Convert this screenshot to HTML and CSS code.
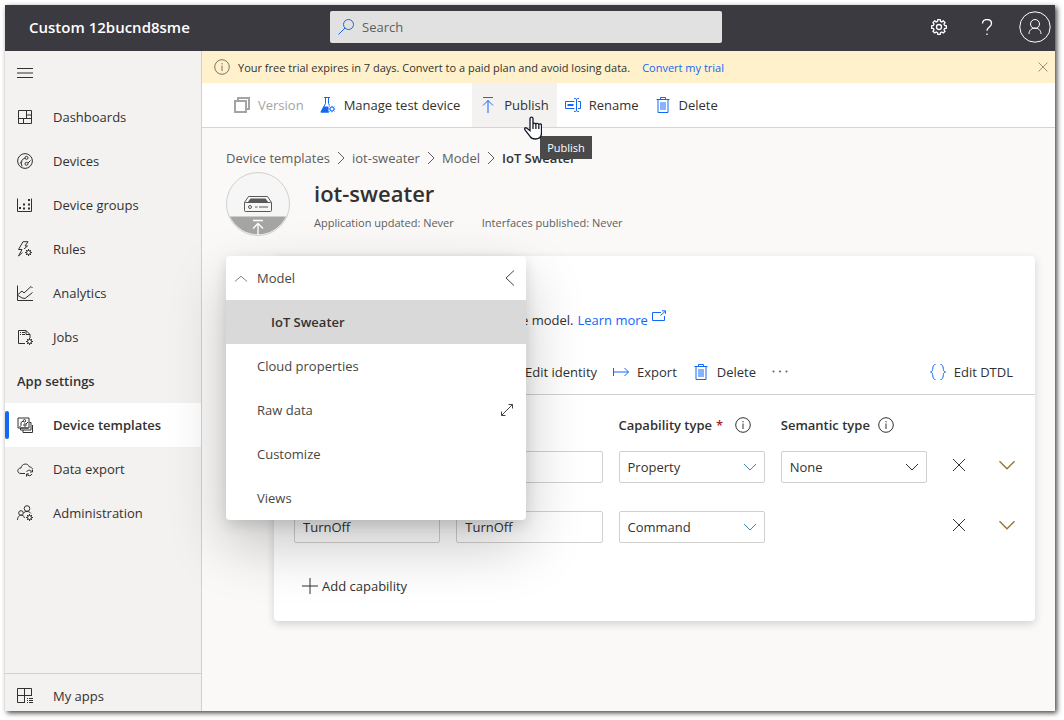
FILE: index.html
```html
<!DOCTYPE html>
<html lang="en">
<head>
<meta charset="utf-8">
<title>iot-sweater</title>
<link rel="stylesheet" href="styles.css">
</head>
<body>
<svg class="sprite" aria-hidden="true">
  <symbol id="gear-small" viewBox="0 0 7 7"><circle cx="3.5" cy="3.5" r="2"/><path d="M3.5 0v1.5M3.5 5.5V7M0 3.5h1.5M5.500 3.500H7M1 1l1.100 1.100M4.900 4.900L6 6M6 1L4.900 2.100M2.100 4.900L1 6"/></symbol>
  <symbol id="trash" viewBox="0 0 16 16"><path d="M1.500 2.500h13M5.500 2.500v-2h5v2M3 2.500v13h10v-13M6 5v8M8 5v8M10 5v8"/></symbol>
  <symbol id="down" viewBox="0 0 16 16"><path d="M2 5l6 6 6-6"/></symbol>
  <symbol id="right" viewBox="0 0 8 16"><path d="M1 2l6 6-6 6"/></symbol>
  <symbol id="close" viewBox="0 0 16 16"><path d="M2 2l12 12M14 2L2 14"/></symbol>
  <symbol id="info" viewBox="0 0 16 16"><circle cx="8" cy="8" r="7.300"/><path d="M8 6.500V12M8 4v1.300"/></symbol>
</svg>
<div class="app">
  <header class="topbar">
    <div class="brand">Custom 12bucnd8sme</div>
    <label class="search">
      <svg class="icon blue" viewBox="0 0 16 16"><circle cx="10.500" cy="5.500" r="5"/><path d="M7 9L0.500 15.500"/></svg>
      <input type="search" placeholder="Search" aria-label="Search">
    </label>
    <div class="top-actions">
      <button class="top-button" aria-label="Settings"><svg class="icon bold" viewBox="0 0 16 16"><circle cx="8" cy="8" r="2.500"/><path d="M6.500 2.300L6.800.6h2.400l.3 1.700 1.300.6 1.500-1 1.700 1.700-1 1.500.6 1.300 1.800.4v2.400l-1.800.3-.6 1.300 1 1.500-1.700 1.700-1.500-1-1.300.6-.3 1.800H6.800l-.3-1.800-1.300-.6-1.500 1L2 12.300l1-1.500-.6-1.300L.6 9.200V6.800l1.800-.4L3 5.100 2 3.600l1.700-1.700 1.500 1z"/></svg></button>
      <button class="top-button" aria-label="Help"><svg class="icon" viewBox="0 0 16 16"><path class="bold" d="M3.500 4.500c0-2.500 1.800-4 4.500-4s4.500 1.600 4.500 4c0 3.200-4.500 3.800-4.500 7.300M8 14.400V16"/></svg></button>
      <button class="avatar" aria-label="Account"><svg viewBox="0 0 32 32"><circle cx="16" cy="16" r="15.200"/><circle cx="16" cy="13" r="4.500"/><path d="M10 23c0-8 12-8 12 0"/></svg></button>
    </div>
  </header>
  <div class="shell">
    <nav class="nav">
      <button class="nav-item" aria-label="Toggle navigation"><svg class="icon" viewBox="0 0 16 16"><path d="M0 3.500h16M0 8h16M0 12.500h16"/></svg></button>
      <a class="nav-item" href="#"><svg class="icon" viewBox="0 0 16 16"><path d="M1.500 1.500h13v13h-13zM9.500 1.500v8M1.500 9.500h13M9.500 6h5M6.500 9.500v5"/></svg>Dashboards</a>
      <a class="nav-item" href="#"><svg class="icon" viewBox="0 0 16 16"><circle cx="8" cy="8" r="7.400"/><circle cx="9.500" cy="4.800" r="1.500"/><circle cx="9.500" cy="10.800" r="1.500"/><path d="M8 5L5.500 6.500 4 9l1 4.500M11 10l2.500-2.500M3 10.500l2-2"/></svg>Devices</a>
      <a class="nav-item" href="#"><svg class="icon" viewBox="0 0 16 16"><path d="M.5 1.500v13h14v-13"/><path class="fill" d="M2 10h2v2H2zM6 6.500h2v2H6zM6 10.500h2v2H6zM11 2h2v2h-2zM11 6.500h2v2h-2zM11 10.500h2v2h-2z"/></svg>Device groups</a>
      <a class="nav-item" href="#"><svg class="icon" viewBox="0 0 16 16"><path d="M6 .7h5L8 5h2.500L7 8M6 .7L1.500 8.500H5L1.500 15l4-3.500"/><use href="#gear-small" x="8" y="8" width="7" height="7"/></svg>Rules</a>
      <a class="nav-item" href="#"><svg class="icon" viewBox="0 0 16 16"><path d="M.5.500v15H16M1 9.500l4-3.500 2 2 7-6.500 1.500 1.500M1 10.500l4 2.500 3 .5 7.500-6"/></svg>Analytics</a>
      <a class="nav-item" href="#"><svg class="icon" viewBox="0 0 16 16"><path d="M8 14.500H1.500v-13h7.500l4 4V9M9 1.500v4h4M3 3.500h1M5 3.500h3M3 5.500h1M5 5.500h3"/><use href="#gear-small" x="9" y="9" width="7" height="7"/></svg>Jobs</a>
      <div class="nav-heading">App settings</div>
      <a class="nav-item current" href="#"><svg class="icon" viewBox="0 0 16 16"><path d="M1 1h11v10H1zM12.500 5.500h1.500v7.500H3.500v-2M15.500 8v7.500H6V13"/><circle cx="7.500" cy="3.800" r="1.200"/><circle cx="8" cy="8" r="1.200"/><path d="M6.300 4L4 5.500v3L2.500 10M9 7l2-2M3.500 11h8"/></svg>Device templates</a>
      <a class="nav-item" href="#"><svg class="icon" viewBox="0 0 16 16"><path d="M8 12.500H4C-.5 12.500 0 7 4 7c.5-4.500 7-5.500 8.300-1.200 1.700.1 2.700 1 3.200 2.200"/><path d="M9.500 11c.7-2 4-2.500 5.500-.5M15.500 8.500v2.500H13M15 13c-.7 2-4 2.300-5 .5M9.500 15.500V13H12"/></svg>Data export</a>
      <a class="nav-item" href="#"><svg class="icon" viewBox="0 0 16 16"><circle cx="10" cy="3.500" r="2.800"/><circle cx="4" cy="8" r="2.300"/><path d="M.5 15c0-6 6.500-6 7-2M6.500 8c1.500-2 5.500-2.300 7.500.5"/><use href="#gear-small" x="9" y="9" width="7" height="7"/></svg>Administration</a>
      <div class="nav-footer"><a class="nav-item" href="#"><svg class="icon" viewBox="0 0 16 16"><path d="M8 14.500H.5V.5h14V8M7.500.5v14M.5 7.500h14M10 10.500h1M12 10.500h4M10 12.500h1M12 12.500h4M10 14.500h1M12 14.500h4"/></svg>My apps</a></div>
    </nav>
    <main class="main">
      <div class="banner">
        <svg class="icon muted" viewBox="0 0 16 16"><use href="#info"/></svg>
        <div class="banner-text"><span>Your free trial expires in 7 days. Convert to a paid plan and avoid losing data.</span><a href="#">Convert my trial</a></div>
        <button class="dismiss" aria-label="Dismiss"><svg class="icon-12 muted"><use href="#close"/></svg></button>
      </div>
      <div class="commands">
        <button class="command" disabled><svg class="icon thick" viewBox="0 0 16 16"><path d="M1 4h11v11H1zM4 4V1h11v11h-3"/></svg>Version</button>
        <button class="command wide"><svg class="icon blue" viewBox="0 0 16 16"><path d="M4 .5h6M5.500.5v6L1 15h8M8.500.5v6l1 2"/><path class="fill" d="M3.500 9.500h5v6H.500z"/><use href="#gear-small" x="8.500" y="8.500" width="7" height="7"/></svg>Manage test device</button>
        <div class="command-wrap">
          <button class="command hover"><svg class="icon blue" viewBox="0 0 16 16"><path d="M3 .5h10M8 16V3.500M3 8.500l5-5 5 5"/></svg>Publish</button>
          <svg class="cursor" viewBox="0 0 18 24"><path d="M7.500 1.200c-1 0-1.500.8-1.500 1.500v12l-3-2.500C1 11 0 12.600 1.200 14.200l5 6.500c1 1.600 2.500 2.300 5 2.300 4 0 6.300-2.500 6.300-6V9.500c0-2-2.500-2-2.800-.5 0-2.200-2.800-2.200-2.900-.4-.2-2-2.700-1.800-2.800 0V2.700c0-.8-.5-1.500-1.500-1.500zM9 8v5M11.900 8.500V13M14.800 9v4"/></svg>
          <div class="tooltip" role="tooltip">Publish</div>
        </div>
        <button class="command"><svg class="icon blue" viewBox="0 0 16 16"><path d="M9.500 4.500H.5v7h9M13 4.500h2.500v7H13M11.500 2.500v11M9 1.500c1.500 0 2.500.2 2.500 1 0-.8 1-1 2.500-1M9 14.500c1.500 0 2.500-.2 2.500-1 0 .8 1 1 2.500 1"/><path class="thick" d="M2.500 8h6"/></svg>Rename</button>
        <button class="command"><svg class="icon blue"><use href="#trash"/></svg>Delete</button>
      </div>
      <div class="page-head">
        <div class="crumbs">
          <a href="#">Device templates</a><svg class="crumb-sep"><use href="#right"/></svg><a href="#">iot-sweater</a><svg class="crumb-sep"><use href="#right"/></svg><a href="#">Model</a><svg class="crumb-sep"><use href="#right"/></svg><strong>IoT Sweater</strong>
        </div>
        <div class="identity">
          <svg class="badge" viewBox="0 0 64 64"><circle class="disc" cx="32" cy="32" r="31.500"/><path class="band" d="M4 44.500h56a31 31 0 0 1-56 0z"/><path class="arrow" d="M27 48.500h10M32 63V51.500M27 56.500l5-5 5 5"/><path class="device" d="M18.500 30.500l4-6h19l4 6v8q0 1-1 1h-25q-1 0-1-1zM18.500 31.500q0-1 1-1h25q1 0 1 1"/><path class="device-top" d="M24.500 26.500h15l3 4h-21z"/><circle class="device" cx="24" cy="35" r="1.500"/><path class="device-lights" d="M29 35h2.500M33 35h9"/></svg>
          <div>
            <h1>iot-sweater</h1>
            <div class="facts"><span>Application updated: Never</span><span>Interfaces published: Never</span></div>
          </div>
        </div>
      </div>
      <div class="workspace">
        <section class="card">
          <p class="intro">e model. <a href="#">Learn more<svg class="icon-14 blue" viewBox="0 0 14 14"><path d="M9 2.500H.5v8h12V6M8.500 5.500l4.500-4M10 .8h3.500v3"/></svg></a></p>
          <div class="card-commands">
            <button class="command">Edit identity</button>
            <button class="command"><svg class="icon blue" viewBox="0 0 16 16"><path d="M.5 4v8M.5 8h15M11.500 4l4 4-4 4"/></svg>Export</button>
            <button class="command"><svg class="icon blue"><use href="#trash"/></svg>Delete</button>
            <button class="command more" aria-label="More"><svg class="icon" viewBox="0 0 16 16"><circle class="fill" cx="1.500" cy="7.500" r="1"/><circle class="fill" cx="8" cy="7.500" r="1"/><circle class="fill" cx="14.500" cy="7.500" r="1"/></svg></button>
            <button class="command last"><svg class="icon blue" viewBox="0 0 16 16"><path d="M5.500.5c-4.500 0-1 7-5 7.500 4 .5.500 7.500 5 7.500M10.500.5c4.500 0 1 7 5 7.500-4 .5-.5 7.500-5 7.500"/></svg>Edit DTDL</button>
          </div>
          <div class="fields heads">
            <span></span><span></span>
            <label for="cap1">Capability type <span class="required">*</span><svg class="icon"><use href="#info"/></svg></label>
            <label for="sem1">Semantic type<svg class="icon"><use href="#info"/></svg></label>
          </div>
          <div class="fields">
            <input type="text" aria-label="Display name"><input type="text" aria-label="Name">
            <div class="select"><select id="cap1"><option>Property</option></select><svg class="icon-16 teal"><use href="#down"/></svg></div>
            <div class="select"><select id="sem1"><option>None</option></select><svg class="icon-16"><use href="#down"/></svg></div>
            <button class="row-button" aria-label="Remove"><svg class="icon"><use href="#close"/></svg></button>
            <button class="row-button ochre" aria-label="Expand"><svg class="icon-20"><use href="#down"/></svg></button>
          </div>
          <div class="fields">
            <input type="text" value="TurnOff" aria-label="Display name"><input type="text" value="TurnOff" aria-label="Name">
            <div class="select"><select aria-label="Capability type"><option>Command</option></select><svg class="icon-16 teal"><use href="#down"/></svg></div>
            <span></span>
            <button class="row-button" aria-label="Remove"><svg class="icon"><use href="#close"/></svg></button>
            <button class="row-button ochre" aria-label="Expand"><svg class="icon-20"><use href="#down"/></svg></button>
          </div>
          <button class="add"><svg class="icon" viewBox="0 0 16 16"><path d="M0 8h16M8 0v16"/></svg>Add capability</button>
        </section>
        <aside class="panel">
          <div class="panel-row panel-head"><svg class="icon-14 chevron" viewBox="0 0 16 16"><path d="M1 12l7-6 7 6"/></svg>Model<button class="collapse" aria-label="Collapse"><svg class="icon" viewBox="0 0 16 16"><path d="M12 .5L4 8l8 7.500"/></svg></button></div>
          <a class="panel-row selected" href="#">IoT Sweater</a>
          <a class="panel-row" href="#">Cloud properties</a>
          <a class="panel-row" href="#">Raw data<svg class="icon expand" viewBox="0 0 16 16"><path d="M2.500 13.500l11-11M9.500 2.500h4v4M2.500 9.500v4h4"/></svg></a>
          <a class="panel-row" href="#">Customize</a>
          <a class="panel-row" href="#">Views</a>
        </aside>
      </div>
    </main>
  </div>
</div>
</body>
</html>
```
FILE: styles.css
```css
* { box-sizing: border-box; }
html, body { height: 100%; }
body {
  margin: 0;
  padding: 5px 9px 9px 5px;
  background: #fff;
  color: #323130;
  font: 13px/20px "Open Sans", "Noto Sans", sans-serif;
  overflow: hidden;
}
a { color: #1267f5; text-decoration: none; }
button, input, select { font: inherit; color: inherit; margin: 0; }
button { border: 0; padding: 0; background: none; }
svg { flex: none; fill: none; stroke: currentColor; stroke-width: 1; }
.sprite { position: absolute; width: 0; height: 0; }
.icon, .icon-16 { width: 16px; height: 16px; }
.icon-12 { width: 12px; height: 12px; }
.icon-14 { width: 14px; height: 14px; }
.icon-20 { width: 20px; height: 20px; }
.blue { color: #1267f5; }
.teal { color: #3e87a8; }
.muted { color: #7a7362; }
.fill { fill: currentColor; stroke: none; }
.thick { stroke-width: 2; }
.bold { stroke-width: 1.3; }

.app {
  height: 100%;
  display: flex;
  flex-direction: column;
  box-shadow: 2px 2px 5px #444;
}
.topbar {
  flex: none;
  height: 46px;
  display: grid;
  grid-template-columns: 325fr 392px 333fr;
  align-items: center;
  padding-bottom: 2px;
  background: #3b3a40;
  color: #fff;
}
.brand { padding-left: 24px; font-size: 15px; font-weight: 600; }
.search {
  height: 32px;
  display: flex;
  align-items: center;
  gap: 8px;
  padding: 0 8px;
  background: #e1e1e1;
  border-radius: 2px;
}
.search input { flex: 1; min-width: 0; border: 0; padding: 0; background: none; outline: 0; }
.search input::placeholder { color: #605e5c; opacity: 1; }
.top-actions { display: flex; justify-content: flex-end; align-items: center; padding-right: 4px; }
.top-button { width: 48px; height: 44px; display: grid; place-items: center; }
.avatar { width: 32px; height: 32px; margin-left: 8px; }
.avatar svg { display: block; width: 32px; height: 32px; }

.shell { flex: 1; min-height: 0; display: flex; }
.nav {
  flex: none;
  width: 197px;
  display: flex;
  flex-direction: column;
  background: #f3f2f1;
  border-right: 1px solid #d2d0ce;
}
.nav-item, .nav-heading {
  flex: none;
  height: 44px;
  display: flex;
  align-items: center;
  gap: 20px;
  padding-left: 12px;
  color: #323130;
}
.nav-heading { font-weight: 600; }
.current { position: relative; background: #fff; font-weight: 600; }
.current::before {
  content: "";
  position: absolute;
  left: 0;
  top: 8px;
  bottom: 8px;
  width: 4px;
  border-radius: 2px;
  background: #1267f5;
}
.nav-footer { margin-top: auto; height: 38px; overflow: hidden; border-top: 1px solid #d2d0ce; }

.main { flex: 1; min-width: 0; background: #faf9f8; }
.banner {
  height: 32px;
  display: flex;
  align-items: center;
  gap: 8px;
  padding: 0 6px 0 12px;
  background: #fff1cc;
}
.banner-text { flex: 1; display: flex; gap: 12px; padding-top: 2px; font-size: 11px; }
.dismiss { display: grid; }
.commands {
  height: 45px;
  display: flex;
  padding-left: 24px;
  background: #fff;
  border-bottom: 1px solid #d6d4d2;
}
.command { height: 44px; display: flex; align-items: center; gap: 8px; padding: 0 8px; white-space: nowrap; }
.command:disabled { color: #a6a4a2; }
.wide { padding-right: 12px; }
.command-wrap { position: relative; }
.hover { background: #f3f2f1; }
.cursor { position: absolute; z-index: 3; left: 52px; top: 33px; width: 18px; height: 24px; fill: #fff; color: #111827; stroke-width: 1.3; }
.tooltip {
  position: absolute;
  z-index: 2;
  left: 68px;
  top: 53px;
  padding: 0 7px;
  background: #4b4a4a;
  color: #fff;
  font-size: 11px;
  line-height: 23px;
}

.page-head { padding: 20px 24px; }
.crumbs { display: flex; align-items: center; gap: 7px; color: #605e5c; }
.crumbs a { color: inherit; }
.crumbs strong { font-weight: 600; color: #323130; }
.crumb-sep { width: 8px; height: 16px; }
.identity { display: flex; gap: 24px; margin-top: 4px; }
.badge { width: 64px; height: 64px; }
.disc { fill: #f6f6f6; stroke: #d2d0ce; }
.band { fill: #a5a5a4; stroke: none; }
.arrow { stroke: #fff; stroke-width: 1.3; }
.device { fill: none; stroke: #595959; }
.device-lights { fill: none; stroke: #a5a5a4; stroke-width: 2; }
.device-top { fill: #595959; stroke: none; }
h1 { margin: 3px 0 2px; font-size: 22px; line-height: 36px; font-weight: 600; }
.facts { display: flex; gap: 28px; font-size: 11px; line-height: 20px; color: #605e5c; }

.workspace { position: relative; padding: 0 20px 0 24px; }
.card {
  margin-left: 48px;
  padding: 54px 0 20px;
  background: #fff;
  border-radius: 4px;
  box-shadow: 0 3px 9px rgba(0, 0, 0, .16);
}
.intro { display: flex; gap: 4px; margin: 0 0 20px 247px; }
.intro a { display: flex; gap: 4px; }
.card-commands { display: flex; height: 45px; padding: 0 14px 0 243px; border-bottom: 1px solid #d2d0ce; }
.more { color: #605e5c; }
.last { margin-left: auto; }
.fields {
  display: grid;
  grid-template-columns: repeat(4, minmax(0, 1fr)) 32px 32px;
  gap: 16px;
  padding: 0 12px 0 20px;
  margin-bottom: 28px;
}
.heads { margin: 20px 0 16px; font-weight: 600; }
.heads label { display: flex; align-items: center; white-space: nowrap; }
.heads .icon { margin-left: 8px; }
.required { color: #a4262c; margin-left: 4px; margin-right: 4px; }
.fields input, .select select {
  width: 100%;
  height: 32px;
  padding: 0 8px;
  background: transparent;
  border: 1px solid #d2d0ce;
  border-radius: 2px;
  appearance: none;
}
.select { display: grid; align-items: center; }
.select > * { grid-area: 1 / 1; }
.select svg { justify-self: end; margin-right: 7px; pointer-events: none; }
.row-button { height: 28px; display: grid; place-items: center; }
.ochre { color: #98702f; }
.add { display: flex; align-items: center; gap: 4px; margin-left: 28px; height: 30px; }

.panel {
  position: absolute;
  z-index: 1;
  left: 24px;
  top: 0;
  width: 300px;
  background: #fff;
  border-radius: 4px;
  overflow: hidden;
  box-shadow: 0 25px 58px rgba(0, 0, 0, .22), 0 5px 14px rgba(0, 0, 0, .12);
}
.panel-row { height: 44px; display: flex; align-items: center; padding: 0 11px 0 31px; color: #484644; }
.panel-head { padding: 0 8px; gap: 9px; }
.chevron { color: #767472; }
.collapse { margin-left: auto; display: grid; }
.selected { padding-left: 45px; background: #d9d9d9; font-weight: 600; color: #323130; }
.expand { margin-left: auto; }
```
